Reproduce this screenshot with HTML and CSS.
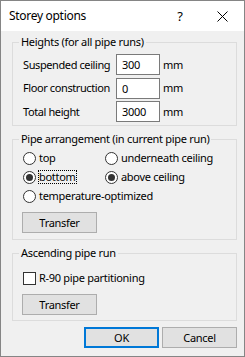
FILE: index.html
```html
<!DOCTYPE html>
<html>
<head>
<meta charset="utf-8">
<link rel="stylesheet" href="styles.css">
</head>
<body>
<div class="window">
  <div class="titlebar">
    <span class="title">Storey options</span>
    <span class="help">?</span>
    <span class="close"><svg width="11" height="11" viewBox="0 0 11 11"><path d="M0.5 0.5 L10.5 10.5 M10.5 0.5 L0.5 10.5" stroke="#000" stroke-width="1" fill="none"/></svg></span>
  </div>
  <div class="content">
    <fieldset class="group g-heights">
      <legend>Heights (for all pipe runs)</legend>
      <div class="fields">
        <span class="flabel">Suspended ceiling</span><span class="edit">300</span><span class="unit">mm</span>
        <span class="flabel">Floor construction</span><span class="edit">0</span><span class="unit">mm</span>
        <span class="flabel">Total height</span><span class="edit">3000</span><span class="unit">mm</span>
      </div>
    </fieldset>
    <fieldset class="group g-arrange">
      <legend>Pipe arrangement (in current pipe run)</legend>
      <div class="radios">
        <span class="opt"><span class="radio"></span><span class="otext">top</span></span>
        <span class="opt"><span class="radio"></span><span class="otext">underneath ceiling</span></span>
        <span class="opt"><span class="radio on"></span><span class="otext focus">bottom</span></span>
        <span class="opt"><span class="radio on"></span><span class="otext">above ceiling</span></span>
        <span class="opt wide"><span class="radio"></span><span class="otext">temperature-optimized</span></span>
      </div>
      <span class="btn">Transfer</span>
    </fieldset>
    <fieldset class="group g-ascend">
      <legend>Ascending pipe run</legend>
      <div class="checkrow"><span class="check"></span><span class="otext">R-90 pipe partitioning</span></div>
      <span class="btn">Transfer</span>
    </fieldset>
    <div class="actions">
      <span class="btn default">OK</span>
      <span class="btn">Cancel</span>
    </div>
  </div>
</div>
</body>
</html>
```
FILE: styles.css
```css
* { box-sizing: border-box; }
html, body { margin: 0; padding: 0; background: #f0f0f0; }
body {
  font-family: "Noto Sans", "Liberation Sans", sans-serif;
  font-size: 11px;
  letter-spacing: -0.3px;
  color: #000;
  white-space: nowrap;
}
.window {
  width: 245px;
  height: 357px;
  border: 1px solid #858585;
  background: #f0f0f0;
  display: flex;
  flex-direction: column;
}
.titlebar {
  height: 30px;
  background: #fff;
  display: flex;
  align-items: center;
  padding-left: 8px;
  flex-shrink: 0;
}
.title { flex: 1; font-size: 12px; letter-spacing: -0.3px; line-height: 16px; }
.help { width: 20px; font-size: 13px; line-height: 16px; margin-right: 27px; text-align: center; }
.close { width: 11px; height: 11px; margin-right: 16px; display: flex; }
.close svg { display: block; }

.content {
  padding: 3px 7px 0 11px;
  display: flex;
  flex-direction: column;
}
.group {
  margin: 0;
  border: 1px solid #dcdcdc;
  padding: 0 6px 0 6px;
  min-width: 0;
}
.group legend {
  padding: 0 2px;
  line-height: 16px;
  height: 16px;
}
.g-heights { padding-top: 4px; padding-bottom: 3px; }
.g-arrange { margin-top: 5px; padding-top: 3px; padding-bottom: 6px; }
.g-ascend { margin-top: 5px; padding-top: 9px; padding-bottom: 5px; }

.fields {
  display: grid;
  grid-template-columns: 93px 44px auto;
  grid-auto-rows: 21px;
  row-gap: 2.5px;
  align-items: center;
  padding-left: 4px;
}
.flabel { line-height: 16px; letter-spacing: -0.4px; }
.edit {
  height: 21px;
  border: 1px solid #7a7a7a;
  background: #fff;
  padding-left: 5px;
  line-height: 19px;
}
.unit { padding-left: 3px; line-height: 16px; }

.radios {
  display: grid;
  grid-template-columns: 82px auto;
  grid-auto-rows: 16px;
  row-gap: 3px;
  padding-left: 4px;
}
.opt { display: flex; align-items: center; }
.opt.wide { grid-column: 1 / span 2; }
.radio {
  width: 13px;
  height: 13px;
  border: 1px solid #333;
  border-radius: 50%;
  background: #fff;
  display: flex;
  align-items: center;
  justify-content: center;
  flex-shrink: 0;
}
.radio.on::after {
  content: "";
  width: 7px;
  height: 7px;
  border-radius: 50%;
  background: #333;
}
.otext { margin-left: 2px; padding: 0 1px; line-height: 14px; }
.otext.focus { outline: 1px dotted #000; outline-offset: -1px; }

.btn {
  display: flex;
  align-items: center;
  justify-content: center;
  width: 75px;
  height: 21px;
  border: 1px solid #adadad;
  background: #e1e1e1;
  line-height: 16px;
}
.g-arrange .btn { margin-top: 8px; margin-left: 3px; }
.checkrow { display: flex; align-items: center; height: 16px; padding-left: 4px; }
.check {
  width: 13px;
  height: 13px;
  border: 1px solid #333;
  background: #fff;
  flex-shrink: 0;
}
.g-ascend .btn { margin-top: 8px; margin-left: 3px; }

.actions {
  display: flex;
  justify-content: flex-end;
  gap: 3px;
  margin-top: 6px;
}
.btn.default { border: 2px solid #0078d7; }
```
